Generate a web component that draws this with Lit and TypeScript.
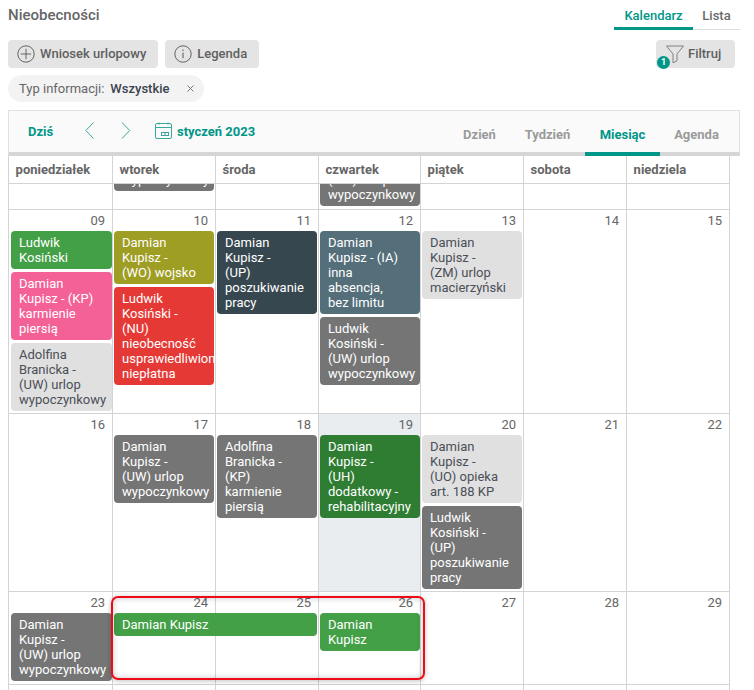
import { LitElement, html, css, svg } from "lit";
import { customElement } from "lit/decorators.js";

type Ev = { t: string; c: string; span?: boolean };
type Day = { n: string; ev?: Ev[]; today?: boolean };

const UW = "uw", GRN = "grn";
const weeks: { cls: string; days: Day[] }[] = [
  {
    cls: "w2",
    days: [
      { n: "09", ev: [
        { t: "Ludwik Kosiński", c: GRN },
        { t: "Damian Kupisz - (KP) karmienie piersią", c: "pink" },
        { t: "Adolfina Branicka - (UW) urlop wypoczynkowy", c: "lgray" },
      ] },
      { n: "10", ev: [
        { t: "Damian Kupisz - (WO) wojsko", c: "olive" },
        { t: "Ludwik Kosiński - (NU) nieobecność usprawiedliwiona niepłatna", c: "red" },
      ] },
      { n: "11", ev: [{ t: "Damian Kupisz - (UP) poszukiwanie pracy", c: "dark" }] },
      { n: "12", ev: [
        { t: "Damian Kupisz - (IA) inna absencja, bez limitu", c: "slate" },
        { t: "Ludwik Kosiński - (UW) urlop wypoczynkowy", c: UW },
      ] },
      { n: "13", ev: [{ t: "Damian Kupisz - (ZM) urlop macierzyński", c: "lgray" }] },
      { n: "14" },
      { n: "15" },
    ],
  },
  {
    cls: "w3",
    days: [
      { n: "16" },
      { n: "17", ev: [{ t: "Damian Kupisz - (UW) urlop wypoczynkowy", c: UW }] },
      { n: "18", ev: [{ t: "Adolfina Branicka - (KP) karmienie piersią", c: UW }] },
      { n: "19", today: true, ev: [{ t: "Damian Kupisz - (UH) dodatkowy - rehabilitacyjny", c: "dgreen" }] },
      { n: "20", ev: [
        { t: "Damian Kupisz - (UO) opieka art. 188 KP", c: "lgray" },
        { t: "Ludwik Kosiński - (UP) poszukiwanie pracy", c: UW },
      ] },
      { n: "21" },
      { n: "22" },
    ],
  },
  {
    cls: "w4",
    days: [
      { n: "23", ev: [{ t: "Damian Kupisz - (UW) urlop wypoczynkowy", c: UW }] },
      { n: "24", ev: [{ t: "Damian Kupisz", c: GRN, span: true }] },
      { n: "25" },
      { n: "26", ev: [{ t: "Damian Kupisz", c: GRN }] },
      { n: "27" },
      { n: "28" },
      { n: "29" },
    ],
  },
];

const names = ["poniedziałek", "wtorek", "środa", "czwartek", "piątek", "sobota", "niedziela"];

const plusIcon = svg`<circle cx="9" cy="9" r="8.2" fill="none" stroke="#555" stroke-width="0.9"/><path d="M9 3.8v10.4M3.8 9h10.4" fill="none" stroke="#555" stroke-width="0.9"/>`;
const infoIcon = svg`<circle cx="9" cy="9" r="8.2" fill="none" stroke="#555" stroke-width="0.9"/><path d="M9 7.6v5.6" fill="none" stroke="#555" stroke-width="1"/><circle cx="9" cy="5.2" r="0.7" fill="#555"/>`;
const funnelIcon = svg`<path d="M0.5 1h17l-6.5 8v6.8l-4 2.2v-9z" fill="none" stroke="#777" stroke-width="0.9" stroke-linejoin="round"/>`;
const calIcon = svg`<rect x="0.5" y="1.5" width="16" height="15" rx="1.5" fill="none" stroke="#3aa79c" stroke-width="1"/><path d="M0.5 5.5h16" fill="none" stroke="#3aa79c" stroke-width="1"/><path d="M4 0.5v2M13 0.5v2" fill="none" stroke="#3aa79c" stroke-width="1"/><rect x="6.5" y="10.5" width="7" height="3" fill="none" stroke="#3aa79c" stroke-width="1"/><path d="M10 10.5v3" stroke="#3aa79c" stroke-width="1"/>`;

@customElement("app-root")
export class AppRoot extends LitElement {
  static styles = css`
    :host {
      display: block;
      width: 754px;
      height: 690px;
      overflow: hidden;
      background: #fff;
      font-family: Roboto, "Liberation Sans", sans-serif;
      font-size: 13px;
      color: #5f6368;
      box-sizing: border-box;
    }
    * { box-sizing: border-box; }
    .page { padding: 0 14px 0 8px; height: 690px; overflow: hidden; }
    .head { display: flex; justify-content: space-between; height: 30px; }
    .title { font-size: 15px; font-weight: 500; line-height: 15px; padding-top: 8px; color: #666; height: 30px; }
    .tabs { display: flex; height: 30px; border-bottom: 1px solid #ddd; }
    .tab { height: 30px; line-height: 32px; font-size: 13px; font-weight: 500; text-align: center; color: #6a6a6a; }
    .tab.k { width: 79px; color: #009688; border-bottom: 3px solid #009688; }
    .tab.l { width: 47px; }
    .actions { display: flex; justify-content: space-between; margin-top: 10px; margin-right: 5px; }
    .btns { display: flex; gap: 7px; }
    .btn {
      position: relative; display: flex; align-items: center; gap: 5px; height: 28px; padding: 0 12px 0 9px;
      background: #e4e4e4; border-radius: 4px; font-size: 13px; font-weight: 500; color: #5f5f5f; line-height: 28px;
    }
    .btn svg { display: block; flex: none; }
    .btn.f { width: 79px; padding-left: 10px; gap: 4px; }
    .badge {
      position: absolute; left: 1px; top: 16px; width: 13px; height: 13px; border-radius: 50%; z-index: 1;
      background: #009688; color: #fff; font-size: 9px; font-weight: 700; line-height: 13px; text-align: center;
    }
    .chips { display: flex; margin-top: 7px; }
    .chip {
      display: flex; align-items: center; height: 27px; padding: 0 0 0 11px; background: #f3f3f3; border-radius: 14px;
      font-size: 13px; color: #666; width: 196px; white-space: nowrap;
    }
    .chip b { font-weight: 500; color: #3c4350; margin-left: 6px; }
    .chip svg { display: block; margin-left: 18px; }
    .cal { margin-top: 8px; }
    .bar {
      display: flex; justify-content: space-between; height: 46px; background: #fafafa;
      border: 1px solid #e0e0e0; border-bottom: 4px solid #d6d6d6;
    }
    .bl { display: flex; align-items: center; height: 41px; }
    .today { font-weight: 700; font-size: 13px; color: #009688; margin-left: 19px; width: 57px; }
    .nav { display: block; flex: none; margin-bottom: 3px; }
    .nav.p { margin-right: 27px; }
    .nav.n { margin-right: 24px; }
    .month { font-weight: 700; font-size: 13px; color: #009688; margin-left: 5px; }
    .views { display: flex; margin-right: 6px; }
    .view { height: 45px; padding-top: 16px; line-height: 16px; font-weight: 700; font-size: 13px; color: #9a9a9a; text-align: center; margin-bottom: -4px; }
    .v1 { width: 61px; }
    .v2 { width: 75px; }
    .v3 { width: 75px; color: #009688; border-bottom: 4px solid #009688; }
    .v4 { width: 73px; }
    .grid { width: 722px; }
    .hdr, .week { display: grid; grid-template-columns: 104px 103px 103px 102px 103px 103px 103px; border-bottom: 1px solid #d4d4d4; border-left: 1px solid #d4d4d4; }
    .hdr { height: 28px; }
    .hc { border-right: 1px solid #d4d4d4; padding-left: 6.6px; line-height: 27px; font-weight: 700; font-size: 13px; color: #666; }
    .week { position: relative; }
    .w1 { height: 26px; overflow: hidden; }
    .w2 { height: 204px; }
    .w3 { height: 178px; }
    .w4 { height: 93px; }
    .w5 { height: 60px; }
    .w1c { border-right: 1px solid #d4d4d4; position: relative; overflow: hidden; }
    .clip { position: absolute; left: 1px; right: 0; background: #757575; color: #fff; border-radius: 0 0 4px 4px; padding: 0 8px 4px; line-height: 15px; }
    .c2 { bottom: 18px; right: 1px; }
    .c4 { bottom: 3px; }
    .cell { border-right: 1px solid #d4d4d4; display: flex; flex-direction: column; gap: 3px; }
    .cell.now { background: #eaedf0; }
    .num { height: 18px; line-height: 22px; text-align: right; padding-right: 7px; font-size: 13px; color: #666; }
    .ev {
      position: relative; z-index: 1; margin: 0 1px; padding: 4px 18px 4px 8px; border-radius: 4px; line-height: 15px; font-size: 13px;
      overflow: hidden; color: #fff;
    }
    .cell:first-child .ev { margin: 0 0 0 2px; }
    .cell:nth-child(4) .ev { margin-right: 0; }
    .cell .ev.span { margin-right: -102px; }
    .grn { background: #43a047; }
    .pink { background: #f46196; }
    .lgray { background: #e0e0e0; color: #4b4f57; }
    .olive { background: #9e9d24; }
    .red { background: #e53935; }
    .dark { background: #37474f; }
    .slate { background: #546e7a; }
    .uw { background: #757575; }
    .dgreen { background: #2e7d32; }
    .mark {
      position: absolute; left: 102px; top: 4px; width: 314px; height: 84px; z-index: 2;
      border: 2px solid #ee0a16; border-radius: 7px; box-shadow: 0 1px 5px rgba(0, 0, 0, 0.25), inset 0 0 6px rgba(0, 0, 0, 0.22);
      pointer-events: none;
    }
  `;

  render() {
    return html`<div class="page">
      <div class="head">
        <div class="title">Nieobecności</div>
        <div class="tabs"><div class="tab k">Kalendarz</div><div class="tab l">Lista</div></div>
      </div>
      <div class="actions">
        <div class="btns">
          <div class="btn"><svg width="18" height="18" viewBox="0 0 18 18">${plusIcon}</svg>Wniosek urlopowy</div>
          <div class="btn"><svg width="18" height="18" viewBox="0 0 18 18">${infoIcon}</svg>Legenda</div>
        </div>
        <div class="btn f"><span class="badge">1</span><svg width="18" height="18" viewBox="0 0 18 18">${funnelIcon}</svg>Filtruj</div>
      </div>
      <div class="chips"><div class="chip">Typ informacji: <b>Wszystkie</b><svg width="7" height="7" viewBox="0 0 7 7"><path d="M.5 .5l6 6M6.5 .5l-6 6" fill="none" stroke="#777" stroke-width="1"/></svg></div></div>
      <div class="cal">
        <div class="bar">
          <div class="bl">
            <span class="today">Dziś</span>
            <svg class="nav p" width="9" height="17" viewBox="0 0 9 17"><path d="M8.5 .5L.8 8.5l7.7 8" fill="none" stroke="#3aa79c" stroke-width="1"/></svg>
            <svg class="nav n" width="10" height="17" viewBox="0 0 10 17"><path d="M1 .5L8.7 8.5 1 16.5" fill="none" stroke="#3aa79c" stroke-width="1"/></svg>
            <svg class="nav" width="17" height="17" viewBox="0 0 17 17">${calIcon}</svg>
            <span class="month">styczeń 2023</span>
          </div>
          <div class="views">
            <div class="view v1">Dzień</div><div class="view v2">Tydzień</div><div class="view v3">Miesiąc</div><div class="view v4">Agenda</div>
          </div>
        </div>
        <div class="grid">
          <div class="hdr">${names.map((n) => html`<div class="hc">${n}</div>`)}</div>
          <div class="week w1">
            <div class="w1c"></div>
            <div class="w1c"><div class="clip c2">wypoczynkowy</div></div>
            <div class="w1c"></div>
            <div class="w1c"><div class="clip c4">(UW) urlop<br />wypoczynkowy</div></div>
            <div class="w1c"></div><div class="w1c"></div><div class="w1c"></div>
          </div>
          ${weeks.map((w) => html`<div class="week ${w.cls}">
            ${w.days.map((d) => html`<div class="cell ${d.today ? "now" : ""}">
              <div class="num">${d.n}</div>
              ${(d.ev ?? []).map((e) => html`<div class="ev ${e.c} ${e.span ? "span" : ""}">${e.t}</div>`)}
            </div>`)}
            ${w.cls === "w4" ? html`<div class="mark"></div>` : ""}
          </div>`)}
          <div class="week w5">${names.map(() => html`<div class="cell"></div>`)}</div>
        </div>
      </div>
    </div>`;
  }
}
